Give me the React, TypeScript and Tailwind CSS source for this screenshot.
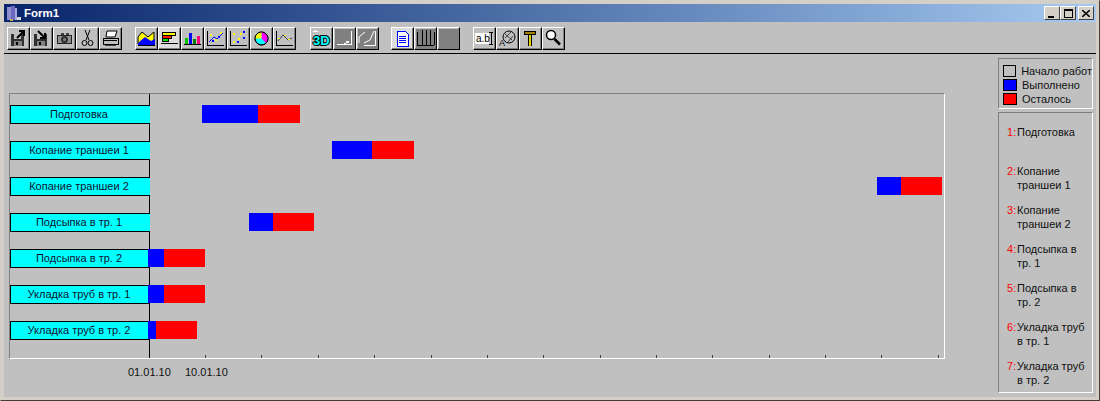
import type { ReactNode } from "react";

const rows = [
  { name: "Подготовка", blue: [202, 258], red: [258, 300] },
  { name: "Копание траншеи 1", blue: [332, 372], red: [372, 414] },
  { name: "Копание траншеи 2", blue: [877, 901], red: [901, 942] },
  { name: "Подсыпка в тр. 1", blue: [249, 273], red: [273, 314] },
  { name: "Подсыпка в тр. 2", blue: [148, 164], red: [164, 205] },
  { name: "Укладка труб в тр. 1", blue: [148, 164], red: [164, 205] },
  { name: "Укладка труб в тр. 2", blue: [148, 156], red: [156, 197] },
];

const ticks = [205, 261, 318, 374, 431, 487, 543, 600, 656, 712, 769, 825, 881, 938];

const notes = [
  { n: 1, lines: ["Подготовка"] },
  { n: 2, lines: ["Копание", "траншеи 1"] },
  { n: 3, lines: ["Копание", "траншеи 2"] },
  { n: 4, lines: ["Подсыпка в", "тр. 1"] },
  { n: 5, lines: ["Подсыпка в", "тр. 2"] },
  { n: 6, lines: ["Укладка труб", "в тр. 1"] },
  { n: 7, lines: ["Укладка труб", "в тр. 2"] },
];

function Btn({ children, down }: { children: ReactNode; down?: boolean }) {
  return (
    <div
      className={
        "w-[23px] h-[23px] flex items-center justify-center border border-t-white border-l-white border-r-black border-b-black shadow-[inset_-1px_-1px_0_#808080] " +
        (down ? "bg-[#dcdcdc]" : "bg-[#c0c0c0]")
      }
    >
      <svg width="17" height="17" viewBox="0 0 17 17" shapeRendering="crispEdges" className="overflow-visible">
        {children}
      </svg>
    </div>
  );
}

function Disk({ arrow }: { arrow: string }) {
  return (
    <>
      <path d="M1 4h12l1 1v11H1z" fill="#303030" />
      <path d="M4 4h7v5H4z" fill="#c0c0c0" />
      <path d="M4 11h8v5H4z" fill="#808080" />
      <path d="M6 12h2v3H6z" fill="#000" />
      <path d={arrow} stroke="#000" strokeWidth="2" fill="none" shapeRendering="auto" />
    </>
  );
}

const Bg = () => <path d="M-1-1h19v19H-1z" fill="#808080" />;

function Base() {
  return <path d="M0 1v14h17" stroke="#000" fill="none" />;
}

export default function App() {
  return (
    <div className="w-[1100px] h-[401px] overflow-hidden bg-[#d4d0c8] border border-[#404040] border-t-[#d4d0c8] border-l-[#d4d0c8] p-[3px] font-['Liberation_Sans',Arial,sans-serif] text-[11px] leading-[13px] text-[#101010] flex flex-col">
      {/* title bar */}
      <div className="h-[18px] shrink-0 flex items-center bg-gradient-to-r from-[#0a246a] to-[#a6caf0] pl-[2px] pr-[2px]">
        <svg width="16" height="16" viewBox="0 0 16 16" shapeRendering="crispEdges">
          <path d="M1 2h4v13H1z" fill="#8f8fd0" />
          <path d="M5 1h4v14H5z" fill="#6a6ac0" />
          <path d="M9 3h2v12H9z" fill="#a9a9e0" />
          <path d="M11 12h4v3h-4z" fill="#d8d8d8" />
          <path d="M4 14h3v2H4z" fill="#c8b040" />
        </svg>
        <span className="ml-[2px] text-white font-bold text-[11.5px]">Form1</span>
        <div className="ml-auto flex items-center">
          <div className="w-[16px] h-[14px] bg-[#d4d0c8] border border-t-white border-l-white border-r-[#404040] border-b-[#404040] flex items-center justify-center">
            <div className="w-[6px] h-[2px] bg-black mt-[7px] mr-[2px]" />
          </div>
          <div className="w-[16px] h-[14px] bg-[#d4d0c8] border border-t-white border-l-white border-r-[#404040] border-b-[#404040] flex items-center justify-center">
            <div className="w-[9px] h-[9px] border border-black border-t-2" />
          </div>
          <div className="ml-[2px] w-[16px] h-[14px] bg-[#d4d0c8] border border-t-white border-l-white border-r-[#404040] border-b-[#404040] flex items-center justify-center">
            <svg width="8" height="7" viewBox="0 0 8 7">
              <path d="M0 0l8 7M8 0L0 7" stroke="#000" strokeWidth="1.5" />
            </svg>
          </div>
        </div>
      </div>

      <div className="flex-1 min-h-0 bg-[#c0c0c0] flex flex-col">
        {/* toolbar */}
        <div className="h-[32px] shrink-0 border-b border-black flex items-start pt-[5px] pl-[3px]">
          <div className="flex">
            <Btn><Disk arrow="M7 8l6-6M9 1h5v5" /></Btn>
            <Btn><Disk arrow="M5 1l6 6M7 8h5V3" /></Btn>
            <Btn>
              <path d="M1 5h15v9H1z" fill="#202020" />
              <path d="M5 3h3v2H5zM10 3h3v2h-3z" fill="#404040" />
              <path d="M2 6h13v7H2z" fill="#909090" />
              <circle cx="8.5" cy="9.5" r="3.5" fill="#303030" shapeRendering="auto" />
              <circle cx="8.5" cy="9.5" r="1.5" fill="#808080" shapeRendering="auto" />
            </Btn>
            <Btn>
              <path d="M6 0l4 10M11 0L7 10" stroke="#000" fill="none" shapeRendering="auto" />
              <circle cx="5.5" cy="13" r="2.5" fill="none" stroke="#000" shapeRendering="auto" />
              <circle cx="11.5" cy="13" r="2.5" fill="none" stroke="#000" shapeRendering="auto" />
            </Btn>
            <Btn>
              <path d="M5 1h10l-2 6H4z" fill="#fff" stroke="#000" shapeRendering="auto" />
              <path d="M1 8h15v6H1z" fill="#c0c0c0" stroke="#000" />
              <path d="M2 10h13v1H2z" fill="#000" />
              <path d="M3 15h11v1H3z" fill="#404040" />
            </Btn>
          </div>
          <div className="flex ml-[13px]">
            <Btn>
              <path d="M0 7l4-5 6 5 6-5v12H0z" fill="#ffff00" stroke="#000" shapeRendering="auto" />
              <path d="M0 13l7-6 6 4 4-2v6H0z" fill="#0000ff" shapeRendering="auto" />
              <path d="M0 15h17" stroke="#000" />
            </Btn>
            <Btn down>
              <path d="M1 2h13v3H1z" fill="#ffff00" stroke="#000" />
              <path d="M1 5h9v3H1z" fill="#ff2000" stroke="#000" />
              <path d="M1 8h6v3H1z" fill="#00e000" stroke="#000" />
              <path d="M0 13h17" stroke="#000" />
            </Btn>
            <Btn>
              <path d="M1 8h3v6H1z" fill="#00c000" />
              <path d="M5 3h3v11H5z" fill="#0000ff" />
              <path d="M9 9h3v5H9z" fill="#008000" />
              <path d="M13 6h3v8h-3z" fill="#ff0080" />
              <path d="M0 14h17" stroke="#000" />
            </Btn>
            <Btn>
              <path d="M2 12l5-5 3 2 6-6" stroke="#0000ff" fill="none" shapeRendering="auto" />
              <path d="M3 4h2v2H3zM8 9h2v2H8zM13 2h2v2h-2z" fill="#ffff00" />
              <path d="M5 10h2v2H5zM11 6h2v2h-2z" fill="#0000ff" />
              <Base />
            </Btn>
            <Btn>
              <path d="M3 3h2v2H3zM10 3h2v2h-2zM8 8h2v2H8zM3 11h2v2H3z" fill="#ffff00" />
              <path d="M13 1h2v2h-2zM7 11h2v2H7zM13 7h2v2h-2z" fill="#0000ff" />
              <Base />
            </Btn>
            <Btn>
              <circle cx="8.5" cy="8.5" r="6.5" fill="#00ffff" stroke="#000" shapeRendering="auto" />
              <path d="M8.5 8.5V2A6.5 6.5 0 0 1 13 13z" fill="#ff00ff" shapeRendering="auto" />
              <path d="M8.5 8.5H2A6.5 6.5 0 0 1 8.5 2z" fill="#ffff00" shapeRendering="auto" />
              <circle cx="8.5" cy="8.5" r="6.5" fill="none" stroke="#000" shapeRendering="auto" />
            </Btn>
            <Btn>
              <path d="M2 11l5-6 5 5 4-2" stroke="#404040" fill="none" shapeRendering="auto" />
              <path d="M2 8h2v1H2zM8 5h2v1H8zM12 9h2v1h-2z" fill="#ffff00" />
              <Base />
            </Btn>
          </div>
          <div className="flex ml-[14px]">
            <Btn>
              <path d="M2 0h1v2H2zM0 1h2v1H0zM3 1h2v1H3z" fill="#fff" />
              <text x="0" y="15" fontSize="13" fontWeight="bold" fontFamily="'Liberation Sans'" fill="#00ffff" stroke="#000" strokeWidth="2" paintOrder="stroke" shapeRendering="auto">3D</text>
            </Btn>
            <Btn>
              <Bg />
              <path d="M15 1v13H1" stroke="#fff" fill="none" />
              <path d="M10 11h3v2h-3zM8 13h2v1H8z" fill="#fff" />
            </Btn>
            <Btn>
              <Bg />
              <path d="M0 13V7l6-5M5 13l6-3 4-9" stroke="#fff" fill="none" shapeRendering="auto" />
              <path d="M16 1v14H5" stroke="#fff" fill="none" />
            </Btn>
          </div>
          <div className="flex ml-[12px]">
            <Btn down>
              <path d="M3 1h8l3 3v12H3z" fill="#fff" stroke="#0000ff" />
              <path d="M5 6h7v1H5zM5 8h7v1H5zM5 10h7v1H5zM5 12h7v1H5z" fill="#0000ff" />
            </Btn>
            <Btn>
              <Bg />
              <path d="M0 2v13M17 2v13M0 15h17M5 0v15M9 0v15M13 0v15" stroke="#000" fill="none" />
            </Btn>
            <Btn><Bg /></Btn>
          </div>
          <div className="flex ml-[13px]">
            <Btn>
              <path d="M-1 3h14v11H-1z" fill="#fff" />
              <text x="0" y="12" fontSize="10" fontFamily="'Liberation Sans'" fill="#000" shapeRendering="auto">a.b</text>
              <path d="M13 2h4M15 2v12M13 14h4" stroke="#000" fill="none" />
            </Btn>
            <Btn>
              <circle cx="10" cy="7" r="6" fill="#c0c0c0" stroke="#000" shapeRendering="auto" />
              <path d="M6 4l7 6M6 8l6-6M9 12l5-6" stroke="#404040" shapeRendering="auto" />
              <text x="0" y="16" fontSize="9" fontFamily="'Liberation Sans'" fill="#000" shapeRendering="auto">A</text>
            </Btn>
            <Btn>
              <path d="M2 1h12v4H2z" fill="#000" />
              <path d="M3 2h10v2H3z" fill="#a08000" />
              <path d="M6 5h4v11H6z" fill="#000" />
              <path d="M7 5h2v11H7z" fill="#e0d000" />
            </Btn>
            <Btn>
              <circle cx="6" cy="5" r="4.5" fill="#fff" stroke="#000" strokeWidth="1.5" shapeRendering="auto" />
              <path d="M9.5 9l5.5 5.5" stroke="#000" strokeWidth="2.5" shapeRendering="auto" />
            </Btn>
          </div>
        </div>

        {/* client */}
        <div className="flex-1 min-h-0 flex pl-[5px]">
          <div className="w-[989px] shrink-0 pt-[39px]">
            {/* chart: bars sit at their data positions */}
            <div className="relative w-[936px] h-[266px] border border-t-[#808080] border-l-[#808080] border-r-white border-b-white">
              <div className="absolute left-[139px] top-0 bottom-0 w-px bg-black z-10" />
              {ticks.map((x) => (
                <div key={x} className="absolute bottom-0 w-px h-[3px] bg-[#404040]" style={{ left: x - 10 }} />
              ))}
              {rows.map((r, i) => {
                const top = 11 + i * 36;
                return (
                  <div key={r.name}>
                    <div className="absolute z-20 left-0 w-[140px] h-[19px] bg-[#00ffff] border border-black border-r-0 flex items-center justify-center text-[#101030] pr-[3px]" style={{ top }}>
                      {r.name}
                    </div>
                    <div className="absolute h-[18px] bg-[#0000ff] z-30" style={{ top, left: r.blue[0] - 10, width: r.blue[1] - r.blue[0] }} />
                    <div className="absolute h-[18px] bg-[#ff0000] z-30" style={{ top, left: r.red[0] - 10, width: r.red[1] - r.red[0] }} />
                  </div>
                );
              })}
            </div>
            <div className="relative h-[13px] mt-[7px]">
              <span className="absolute left-[119px]">01.01.10</span>
              <span className="absolute left-[176px]">10.01.10</span>
            </div>
          </div>

          {/* sidebar */}
          <div className="w-[95px] shrink-0 pt-[4px] flex flex-col gap-[3px]">
            <div className="h-[51px] border border-t-[#808080] border-l-[#808080] border-r-white border-b-white pl-[4px] pt-[5px] flex flex-col">
              {[
                ["bg-[#c0c0c0]", "Начало работ"],
                ["bg-[#0000ff]", "Выполнено"],
                ["bg-[#ff0000]", "Осталось"],
              ].map(([c, t]) => (
                <div key={t} className="h-[14px] flex items-center gap-[5px]">
                  <div className={"w-[14px] h-[12px] border border-black " + c} />
                  <span className="whitespace-nowrap">{t}</span>
                </div>
              ))}
            </div>
            <div className="h-[281px] border border-t-[#808080] border-l-[#808080] border-r-white border-b-white pt-[12px] pl-[8px] flex flex-col">
              {notes.map((x) => (
                <div key={x.n} className="h-[39px] shrink-0 flex leading-[14px]">
                  <span className="w-[10px] text-[#ff0000]">{x.n}:</span>
                  <div>
                    {x.lines.map((l) => (
                      <div key={l} className="whitespace-nowrap">{l}</div>
                    ))}
                  </div>
                </div>
              ))}
            </div>
          </div>
        </div>
      </div>
    </div>
  );
}
